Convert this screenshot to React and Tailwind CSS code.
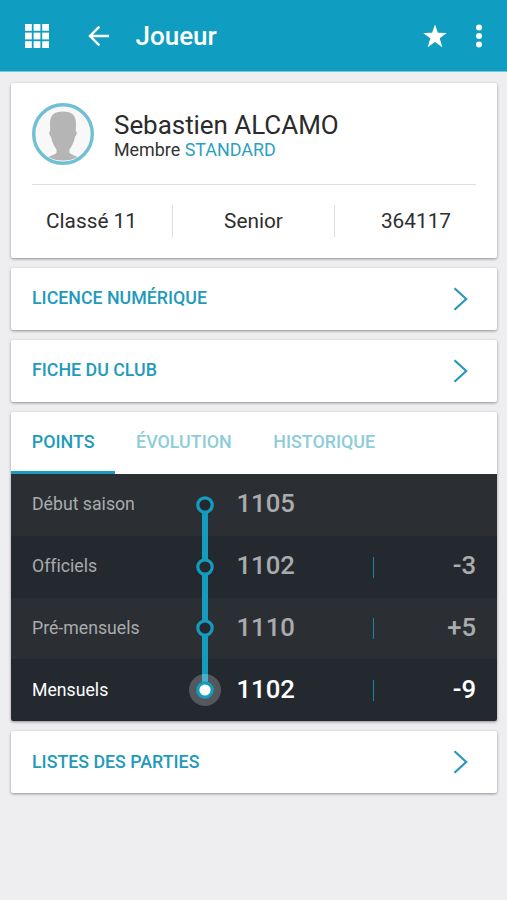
import React from 'react';

const stats = ['Classé 11', 'Senior', '364117'];

const tabs = [
  { label: 'POINTS', active: true },
  { label: 'ÉVOLUTION' },
  { label: 'HISTORIQUE' },
];

const points = [
  { label: 'Début saison', value: '1105' },
  { label: 'Officiels', value: '1102', diff: '-3' },
  { label: 'Pré-mensuels', value: '1110', diff: '+5' },
  { label: 'Mensuels', value: '1102', diff: '-9', current: true },
];

function Header() {
  return (
    <header className="flex h-[72px] items-center border-b border-[#7cc5da] bg-[#0f9dc2] pl-[25px] pr-[25.5px] text-white">
      <svg width="24" height="24" viewBox="0 0 24 24" fill="currentColor">
        {[0, 8.6, 17.2].map((y) =>
          [0, 8.6, 17.2].map((x) => (
            <rect key={`${x}-${y}`} x={x} y={y} width="6.8" height="6.8" />
          ))
        )}
      </svg>
      <svg className="ml-[39px]" width="22" height="22" viewBox="0 0 22 22" fill="none" stroke="currentColor" strokeWidth="2.4">
        <path d="M21 11H2.4M11.4 1.6L2 11l9.4 9.4" />
      </svg>
      <h1 className="ml-[25.5px] pt-px text-[26px] leading-[30px] font-medium">Joueur</h1>
      <svg className="ml-auto" width="24" height="24" viewBox="0 0 24 24" fill="currentColor">
        <path d="M12 0.5l2.9 8.3 8.9.2-7.1 5.3 2.6 8.9L12 18l-7.3 5.2 2.6-8.9L.2 9l8.9-.2z" />
      </svg>
      <svg className="ml-[28.5px]" width="6" height="24" viewBox="0 0 6 24" fill="currentColor">
        <circle cx="3" cy="3.4" r="3" />
        <circle cx="3" cy="12" r="3" />
        <circle cx="3" cy="20.6" r="3" />
      </svg>
    </header>
  );
}

function Card({ className = '', children }) {
  return (
    <section className={`overflow-hidden rounded-[2px] shadow-[0_1px_3px_rgba(0,0,0,0.4)] ${className}`}>
      {children}
    </section>
  );
}

function Avatar() {
  return (
    <svg width="62" height="62" viewBox="0 0 62 62">
      <circle cx="31" cy="31" r="29.5" fill="#f8f8f8" />
      <path
        d="M31 8.6c-8.4 0-13.2 3.4-13 12.2l.2 7.2c-1.6.6-1 4.6.8 5.8 1 5.6 3.2 9.6 5.6 13v2.6c-1.5 2.4-5.4 2.8-8.1 4.6 4 2.5 8.6 3.5 14.5 3.5s10.5-1 14.5-3.5c-2.7-1.8-6.6-2.2-8.1-4.6v-2.6c2.4-3.4 4.6-7.4 5.6-13 1.8-1.2 2.4-5.2.8-5.8l.2-7.2c.2-8.8-4.6-12.2-13-12.2z"
        fill="#b5b5b5"
      />
      <circle cx="31" cy="31" r="29.3" fill="none" stroke="#6fc0d4" strokeWidth="3.4" />
    </svg>
  );
}

function PlayerCard() {
  return (
    <Card className="h-[175px] bg-white pt-5">
      <div className="mx-[21px] flex h-[82px] border-b border-[#dedede]">
        <Avatar />
        <div className="ml-[20px] pt-[7px]">
          <div className="text-[26px] leading-[30px] tracking-[-0.05px] text-[#2b2b2b]">Sebastien ALCAMO</div>
          <div className="text-[17.9px] leading-[20px] text-[#333]">
            Membre <span className="text-[#2d9fc0]">STANDARD</span>
          </div>
        </div>
      </div>
      <div className="mt-[20px] grid h-8 grid-cols-3 divide-x divide-[#dedede]">
        {stats.map((stat) => (
          <div key={stat} className="text-center text-[20.8px] leading-8 text-[#2e2e2e]">
            {stat}
          </div>
        ))}
      </div>
    </Card>
  );
}

function LinkCard({ label }) {
  return (
    <Card className="flex h-[61.8px] items-center bg-white pl-[21px] pr-[29px]">
      <span className="pb-[1.5px] text-[17.8px] leading-5 font-medium text-[#1f9abb]">{label}</span>
      <svg className="ml-auto" width="15" height="24" viewBox="0 0 15 24" fill="none" stroke="#2a98ba" strokeWidth="2.2">
        <path d="M1.5 1.2L13.2 12 1.5 22.8" />
      </svg>
    </Card>
  );
}

function Marker({ first, current }) {
  return (
    <svg className="w-8 shrink-0" width="32" height="62" viewBox="0 0 32 62" fill="none">
      {!first && <path d="M16 0V24" stroke="#159bbd" strokeWidth="6" />}
      {!current && <path d="M16 38V62" stroke="#159bbd" strokeWidth="6" />}
      {current && <circle cx="16" cy="31" r="16" fill="#fff" fillOpacity="0.22" />}
      <circle
        cx="16"
        cy="31"
        r="7.2"
        stroke="#159bbd"
        strokeWidth="3.2"
        fill={current ? '#fff' : '#242930'}
      />
    </svg>
  );
}

function PointsCard() {
  return (
    <Card className="bg-white">
      <nav className="flex h-[62px] text-[17.85px] leading-[60px] font-medium">
        {tabs.map((tab) => (
          <div
            key={tab.label}
            className={`px-[20.8px] ${tab.active ? 'border-b-[3px] border-[#1b9cbd] text-[#1f9abb]' : 'text-[#8ccdd8]'}`}
          >
            {tab.label}
          </div>
        ))}
      </nav>
      {points.map((row, i) => (
        <div
          key={row.label}
          className={`flex h-[61.8px] items-center pl-[21px] pr-[21px] ${i % 2 ? 'bg-[#242930]' : 'bg-[#2b2f33]'} ${row.current ? 'text-white' : 'text-[#a9abad]'}`}
        >
          <span className="w-[157px] pb-px text-[17.7px] leading-5 [font-variant-ligatures:none]">{row.label}</span>
          <Marker first={i === 0} current={row.current} />
          <span className="ml-[15.5px] w-[136.5px] pb-[3px] text-[25.7px] leading-[30px] font-medium">{row.value}</span>
          {row.diff && (
            <>
              <span className="mt-px h-[21px] w-px shrink-0 bg-[#1487a6]" />
              <span className="ml-auto pb-[3px] text-[25.7px] leading-[30px] font-medium">{row.diff}</span>
            </>
          )}
        </div>
      ))}
    </Card>
  );
}

export default function App() {
  return (
    <div className="h-[900px] w-[507px] overflow-hidden bg-[#eeeef0] font-[Roboto,sans-serif]">
      <Header />
      <main className="flex flex-col gap-[10.3px] pt-[10.5px] pr-[10px] pl-[11px]">
        <PlayerCard />
        <LinkCard label="LICENCE NUMÉRIQUE" />
        <LinkCard label="FICHE DU CLUB" />
        <PointsCard />
        <LinkCard label="LISTES DES PARTIES" />
      </main>
    </div>
  );
}
